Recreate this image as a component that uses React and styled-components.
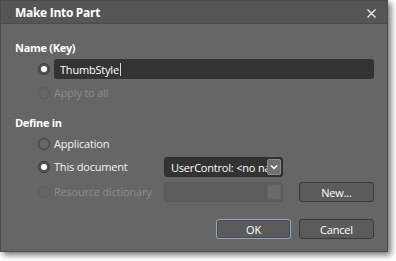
import React from "react";
import styled, { createGlobalStyle, css } from "styled-components";

const Global = createGlobalStyle`
  html, body { margin: 0; padding: 0; background: #ffffff; }
  body { font-family: "Open Sans", "Noto Sans", sans-serif; }
  * { box-sizing: border-box; }
`;

const Page = styled.div`
  width: 396px;
  height: 261px;
  background: #ffffff;
`;

const Window = styled.div`
  width: 388px;
  height: 252px;
  background: #666666;
  border: 1px solid #4a4a4a;
  box-shadow: 3px 3px 6px rgba(0, 0, 0, 0.55);
  display: flex;
  flex-direction: column;
`;

const TitleBar = styled.div`
  height: 23px;
  background: #555555;
  border-bottom: 1px solid #4c4c4c;
  display: flex;
  align-items: center;
  justify-content: space-between;
  padding: 0 10px 0 14px;
  flex-shrink: 0;
`;

const Title = styled.div`
  color: #ffffff;
  font-weight: 700;
  font-size: 12px;
  letter-spacing: -0.3px;
`;

const CloseButton = styled.div`
  width: 12px;
  height: 12px;
  display: flex;
  align-items: center;
  justify-content: center;
  margin-top: 2px;
`;

const Body = styled.div`
  flex: 1;
  display: flex;
  flex-direction: column;
  padding: 16px 13px 0 14px;
  font-size: 11px;
  letter-spacing: -0.2px;
  color: #f2f2f2;
`;

const Heading = styled.div`
  font-weight: 700;
  font-size: 11px;
  letter-spacing: -0.3px;
  line-height: 16px;
  height: 16px;
  color: #ffffff;
  margin-top: ${(p) => p.$mt || 0}px;
`;

const Row = styled.div`
  display: flex;
  align-items: center;
  height: 20px;
  padding-left: 23px;
  margin-top: ${(p) => p.$mt || 0}px;
  gap: 4px;
`;

const Radio = styled.span`
  width: 12px;
  height: 12px;
  border-radius: 50%;
  flex-shrink: 0;
  border: 1px solid ${(p) => (p.$disabled ? "#5a5a5a" : "#3a3a3a")};
  background: ${(p) => (p.$checked ? "#555555" : "transparent")};
  display: flex;
  align-items: center;
  justify-content: center;
  ${(p) =>
    p.$checked &&
    css`
      &::after {
        content: "";
        width: 6px;
        height: 6px;
        border-radius: 50%;
        background: #ffffff;
      }
    `}
`;

const Label = styled.span`
  color: ${(p) => (p.$disabled ? "#8c8c8c" : "#f4f4f4")};
  width: ${(p) => (p.$w ? `${p.$w}px` : "auto")};
  white-space: nowrap;
  line-height: 16px;
`;

const TextBox = styled.div`
  flex: 1;
  height: 20px;
  background: #333333;
  border-radius: 3px;
  display: flex;
  align-items: center;
  padding-left: 6px;
  color: #ffffff;
`;

const Caret = styled.span`
  display: inline-block;
  width: 1px;
  height: 13px;
  background: #d8d8d8;
  margin-left: 1px;
`;

const Select = styled.div`
  width: 119px;
  height: 20px;
  border-radius: 3px;
  background: ${(p) => (p.$disabled ? "#5d5d5d" : "#333333")};
  border: 1px solid ${(p) => (p.$disabled ? "#595959" : "#2e2e2e")};
  display: flex;
  align-items: center;
  padding: 0 1px 0 6px;
  color: #ffffff;
  overflow: hidden;
`;

const SelectText = styled.span`
  flex: 1;
  white-space: nowrap;
  overflow: hidden;
`;

const DropButton = styled.span`
  width: 14px;
  height: 16px;
  border-radius: 2px;
  background: ${(p) => (p.$disabled ? "#6a6a6a" : "#707070")};
  border: 1px solid ${(p) => (p.$disabled ? "#626262" : "#8a8a8a")};
  display: flex;
  align-items: center;
  justify-content: center;
  flex-shrink: 0;
`;

const Button = styled.div`
  width: 75px;
  height: 20px;
  border-radius: 3px;
  background: #5b5b5b;
  border: 1px solid ${(p) => (p.$focused ? "#8ea8c8" : "#383838")};
  box-shadow: ${(p) => (p.$focused ? "inset 0 0 0 1px #4a4a4a" : "none")};
  display: flex;
  align-items: center;
  justify-content: center;
  color: #ffffff;
  margin-left: ${(p) => p.$ml || 0}px;
`;

const Footer = styled.div`
  display: flex;
  justify-content: flex-end;
  gap: 8px;
  margin-top: 17px;
`;

export default function App() {
  return (
    <Page>
      <Global />
      <Window>
        <TitleBar>
          <Title>Make Into Part</Title>
          <CloseButton>
            <svg width="9" height="9" viewBox="0 0 9 9">
              <path d="M0.5 0.5 L8.5 8.5 M8.5 0.5 L0.5 8.5" stroke="#e6e6e6" strokeWidth="1.4" />
            </svg>
          </CloseButton>
        </TitleBar>
        <Body>
          <Heading>Name (Key)</Heading>
          <Row $mt={3}>
            <Radio $checked />
            <TextBox>
              ThumbStyle
              <Caret />
            </TextBox>
          </Row>
          <Row $mt={4}>
            <Radio $disabled />
            <Label $disabled>Apply to all</Label>
          </Row>
          <Heading $mt={12}>Define in</Heading>
          <Row $mt={3}>
            <Radio />
            <Label>Application</Label>
          </Row>
          <Row $mt={3}>
            <Radio $checked />
            <Label $w={106}>This document</Label>
            <Select>
              <SelectText>UserControl: &lt;no name&gt;</SelectText>
              <DropButton>
                <svg width="8" height="6" viewBox="0 0 8 6">
                  <path d="M1 1.5 L4 4.5 L7 1.5" stroke="#ffffff" strokeWidth="1.5" fill="none" />
                </svg>
              </DropButton>
            </Select>
          </Row>
          <Row $mt={5}>
            <Radio $disabled />
            <Label $disabled $w={106}>Resource dictionary</Label>
            <Select $disabled>
              <SelectText />
              <DropButton $disabled />
            </Select>
            <Button $ml={12}>New...</Button>
          </Row>
          <Footer>
            <Button $focused>OK</Button>
            <Button>Cancel</Button>
          </Footer>
        </Body>
      </Window>
    </Page>
  );
}
